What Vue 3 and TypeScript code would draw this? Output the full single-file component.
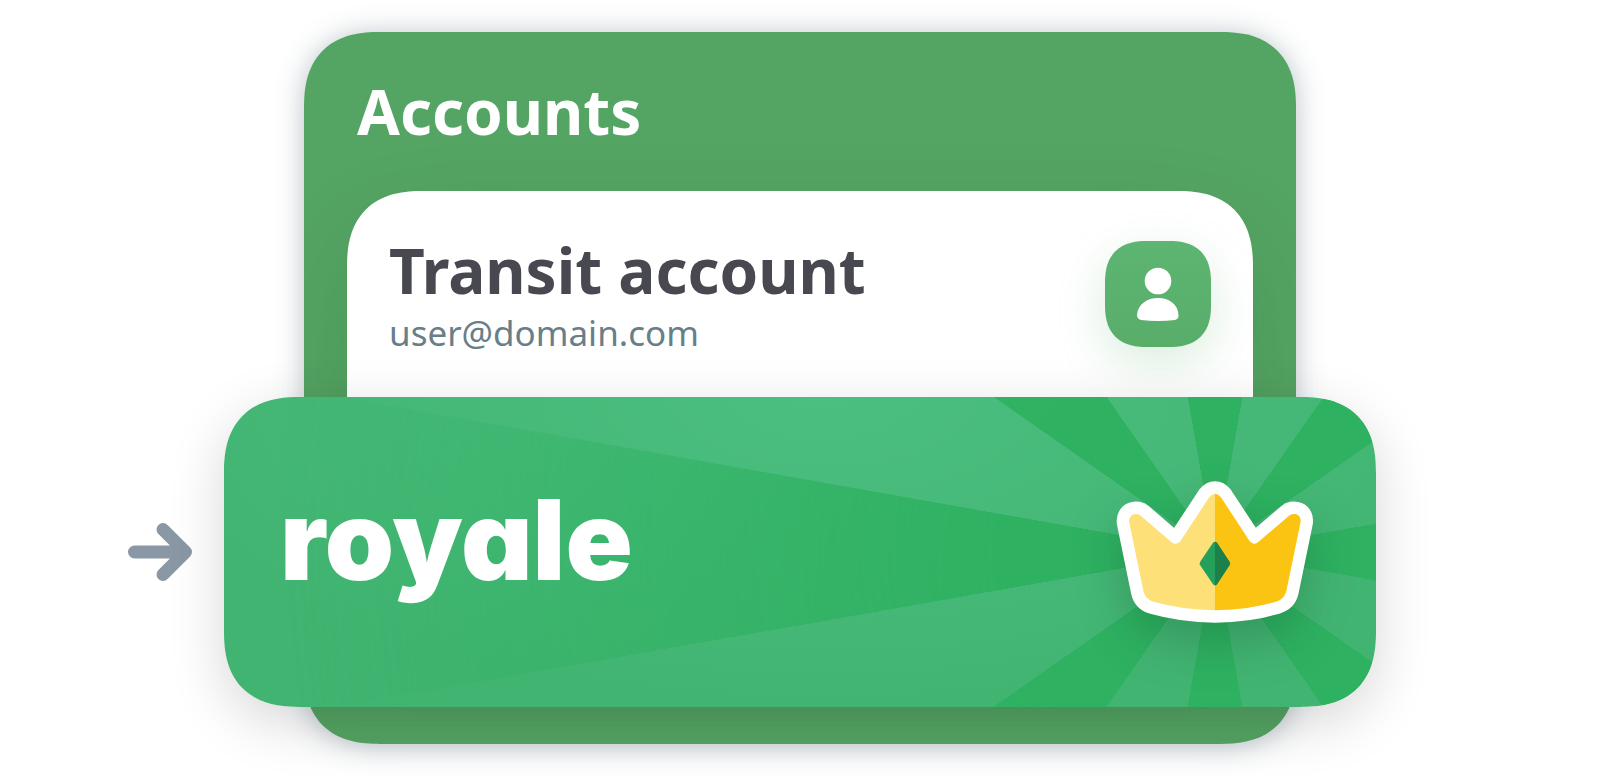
<script setup lang="ts">
interface Account {
  name: string
  email: string
}

const account: Account = {
  name: 'Transit account',
  email: 'user@domain.com',
}
</script>

<template>
  <main class="stage">
    <section class="card">
      <h1 class="title">Accounts</h1>
      <div class="panel">
        <div class="identity">
          <h2 class="name">{{ account.name }}</h2>
          <p class="email">{{ account.email }}</p>
        </div>
        <button class="avatar" type="button" aria-label="Open profile">
          <svg viewBox="0 0 42 54" width="42" height="54" aria-hidden="true">
            <circle cx="21" cy="14" r="13.300" />
            <path d="M0 48C1 37 10 31 21 31S41 37 41.500 48Q42 52 38 53Q21 55 4 53Q0 52 0 48Z" />
          </svg>
        </button>
      </div>
    </section>

    <svg class="arrow" viewBox="0 0 64 58" width="64" height="58" aria-hidden="true">
      <path d="M6.500 29H57M35 6.500L57.500 29L35 51.500" />
    </svg>

    <section class="banner">
      <p class="brand">royale</p>
      <svg class="crown" viewBox="51 33 588 425" width="196" height="142" aria-hidden="true">
        <defs>
          <clipPath id="right-half"><rect x="345" y="0" width="345" height="510" /></clipPath>
          <path
            id="crown-shape"
            d="M88 158C84 131 110 125 124 138L212 214Q227 229 241 213L327 82Q345 60 363 82L449 213Q463 229 477 214L566 138C580 125 606 131 601 158L559 362Q554 386 530 394Q440 420 345 420Q250 420 158 394Q135 386 130 362Z"
          />
          <path
            id="gem-shape"
            d="M339 218Q345 212 351 218L388 274Q392 280 388 286L351 342Q345 349 339 342L301 286Q297 280 301 274Z"
          />
        </defs>
        <use href="#crown-shape" class="crown-outline" />
        <use href="#crown-shape" class="crown-light" />
        <use href="#crown-shape" class="crown-gold" clip-path="url(#right-half)" />
        <use href="#gem-shape" class="gem-light" />
        <use href="#gem-shape" class="gem-dark" clip-path="url(#right-half)" />
      </svg>
    </section>
  </main>
</template>

<style>
body {
  margin: 0;
  background: #fff;
}
</style>

<style scoped>
.stage {
  display: grid;
  grid-template-columns: 14fr 5fr 62fr 5fr 14fr;
  grid-template-rows: 365px auto 37px;
  padding: 32px 0 34px;
  overflow: hidden;
  font-family: 'Noto Sans', 'Open Sans', sans-serif;
}

.card,
.panel,
.banner {
  border-radius: 64px;
}

.card {
  grid-column: 3;
  grid-row: 1 / 4;
  box-sizing: border-box;
  padding: 47px 43px 0;
  overflow: hidden;
  background: #54a463;
  box-shadow: 0 2px 28px rgba(50, 75, 90, 0.34);
}

.title {
  margin: 0 0 48px;
  padding: 0 10px;
  color: #fff;
  font-size: 62px;
  font-weight: 700;
  line-height: 64px;
}

.panel {
  display: flex;
  justify-content: space-between;
  align-items: flex-start;
  box-sizing: border-box;
  min-height: 400px;
  padding: 47px 42px;
  background: #fff;
  box-shadow: 0 40px 100px rgba(20, 50, 20, 0.1);
}

.name {
  margin: 0 0 7px;
  color: #484850;
  font-size: 62px;
  font-weight: 700;
  line-height: 64px;
}

.email {
  margin: 0;
  color: #687e88;
  font-size: 35px;
  line-height: 48px;
}

.avatar {
  display: flex;
  justify-content: center;
  align-items: center;
  flex: none;
  width: 106px;
  height: 106px;
  margin: 3px 0 0;
  padding: 0;
  border: 0;
  border-radius: 38px;
  background: linear-gradient(#5db572, #58ad69);
  box-shadow: 0 16px 48px rgba(88, 174, 106, 0.22);
}

.avatar svg {
  fill: #fff;
}

.arrow {
  grid-column: 1;
  grid-row: 2;
  place-self: center end;
  margin-right: 32px;
  fill: none;
  stroke: #8a98a6;
  stroke-width: 13;
  stroke-linecap: round;
  stroke-linejoin: round;
}

.banner {
  grid-column: 2 / 5;
  grid-row: 2;
  display: flex;
  justify-content: space-between;
  align-items: center;
  box-sizing: border-box;
  min-height: 310px;
  padding: 0 63px 0 56px;
  position: relative;
  isolation: isolate;
  background: radial-gradient(ellipse 60% 100% at 52% 0, #4bbf80, #42b472);
  box-shadow: 0 16px 56px rgba(0, 0, 0, 0.16);
}

/* Darker rays that start behind the crown and fade out towards the wordmark */
.banner::before {
  content: '';
  position: absolute;
  inset: 0;
  z-index: -1;
  border-radius: inherit;
  background: repeating-conic-gradient(
    from -10deg at calc(100% - 161px) 50%,
    #2eb161 0deg 20deg,
    transparent 20.1deg 45deg,
    #2eb161 45.1deg 65deg,
    transparent 65.1deg 90deg
  );
  mask-image: radial-gradient(circle 940px at calc(100% - 161px) 50%, #000 20%, transparent);
}

.brand {
  margin: 0;
  padding-bottom: 24px;
  color: #fff;
  font-family: Inter, 'Noto Sans', sans-serif;
  font-size: 111px;
  font-weight: 900;
  font-feature-settings: 'cv11';
  line-height: 128px;
}

.crown {
  flex: none;
  overflow: visible;
  filter: drop-shadow(0 20px 24px rgba(10, 60, 30, 0.24));
}

.crown-outline {
  fill: #fff;
  stroke: #fff;
  stroke-width: 75;
  stroke-linejoin: round;
}

.crown-light {
  fill: #fde077;
}

.crown-gold {
  fill: #fcc412;
}

.gem-light {
  fill: #25a05c;
}

.gem-dark {
  fill: #1d8049;
}

@supports (corner-shape: superellipse(1.3)) {
  .card,
  .panel,
  .banner {
    border-radius: 76px;
    corner-shape: superellipse(1.3);
  }

  .banner::before {
    corner-shape: superellipse(1.3);
  }

  .avatar {
    border-radius: 42px;
    corner-shape: superellipse(1.3);
  }
}
</style>
